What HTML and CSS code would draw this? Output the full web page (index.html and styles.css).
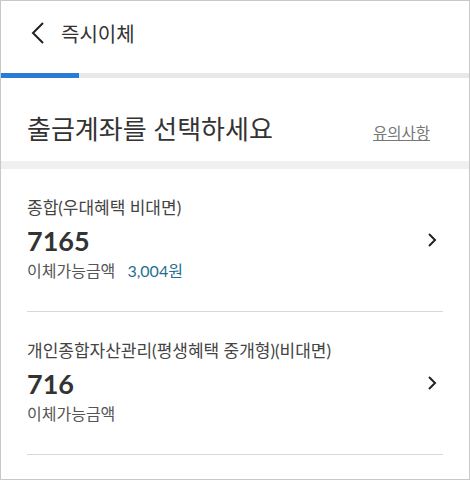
FILE: index.html
```html
<!DOCTYPE html>
<html lang="ko">
<head>
    <meta charset="UTF-8">
    <meta name="viewport" content="width=device-width, initial-scale=1.0">
    <title>즉시이체</title>
    <link rel="stylesheet" href="styles.css">
</head>
<body>
    <div id="screen">
        <div id="header">
            <svg class="back" width="14" height="22" viewBox="0 0 14 22">
                <polyline points="12,1 2,11 12,21" fill="none" stroke="#222" stroke-width="2"/>
            </svg>
            <h1 id="title">즉시이체</h1>
        </div>
        <div id="progress"><div id="progress-fill"></div></div>

        <div id="heading">
            <h2>출금계좌를 선택하세요</h2>
            <a id="notice">유의사항</a>
        </div>
        <div class="band"></div>

        <div id="accounts">
            <div class="account">
                <div class="info">
                    <p class="name">종합(우대혜택 비대면)</p>
                    <p class="number">7165</p>
                    <p class="balance">이체가능금액 <span class="amount">3,004원</span></p>
                </div>
                <svg class="go" width="10" height="14" viewBox="0 0 10 14">
                    <polyline points="2,1 8,7 2,13" fill="none" stroke="#222" stroke-width="2"/>
                </svg>
            </div>
            <div class="account">
                <div class="info">
                    <p class="name">개인종합자산관리(평생혜택 중개형)(비대면)</p>
                    <p class="number">716</p>
                    <p class="balance">이체가능금액</p>
                </div>
                <svg class="go" width="10" height="14" viewBox="0 0 10 14">
                    <polyline points="2,1 8,7 2,13" fill="none" stroke="#222" stroke-width="2"/>
                </svg>
            </div>
        </div>
    </div>
</body>
</html>
```

FILE: styles.css
```css
body {
    margin: 0;
    font-family: 'Lato', 'Noto Sans CJK KR', sans-serif;
    color: #333;
}
#screen {
    width: 470px;
    height: 480px;
    box-sizing: border-box;
    border: 1px solid #c8c8c8;
    background: white;
    overflow: hidden;
}
#header {
    height: 64px;
    display: flex;
    align-items: center;
    padding-left: 30px;
}
#title {
    margin: 0 0 0 16px;
    font-size: 20px;
    font-weight: normal;
    color: #333;
}
#progress {
    margin-top: 8px;
    height: 5px;
    background-color: #e8e8e8;
}
#progress-fill {
    width: 78px;
    height: 100%;
    background-color: #2b7bd6;
}
#heading {
    display: flex;
    justify-content: space-between;
    align-items: baseline;
    padding: 35px 39px 16px 26px;
}
#heading h2 {
    margin: 0;
    font-size: 26px;
    line-height: 32px;
    font-weight: normal;
    color: #333;
}
#notice {
    font-size: 15.5px;
    color: #777;
    text-decoration: underline;
}
.band {
    height: 8px;
    background-color: #f0f0f0;
}
#accounts {
    padding: 0 26px;
}
.account {
    display: flex;
    justify-content: space-between;
    align-items: center;
    padding: 28px 6px 29px 0;
    border-bottom: 1px solid #d8d8d8;
}
.account p {
    margin: 0;
}
.name {
    font-size: 17px;
    line-height: 22px;
    color: #444;
}
.number {
    margin-top: 7px !important;
    font-size: 27px;
    line-height: 30px;
    font-weight: bold;
    color: #333;
}
.balance {
    margin-top: 4px !important;
    font-size: 16px;
    line-height: 22px;
    color: #555;
}
.amount {
    margin-left: 8px;
    color: #1f6f93;
}
```
